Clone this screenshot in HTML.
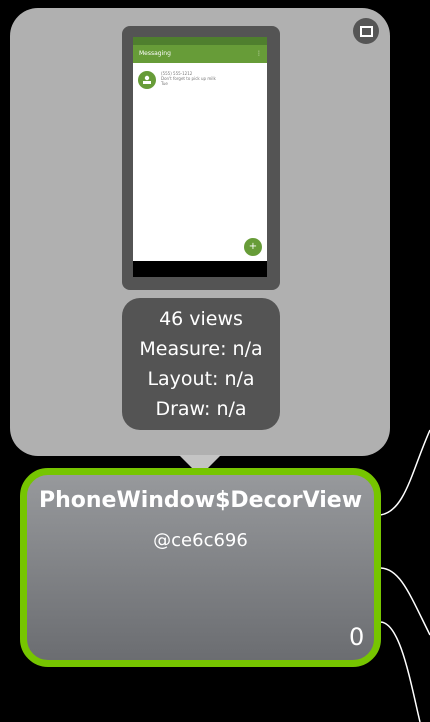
<!DOCTYPE html>
<html><head><meta charset="utf-8"><style>
body{margin:0;width:430px;height:722px;background:#000;position:relative;overflow:hidden;font-family:"DejaVu Sans","Liberation Sans",sans-serif}
div{position:absolute;box-sizing:border-box}
</style></head><body>
<svg width="430" height="722" style="position:absolute;left:0;top:0">
<path d="M380 515 C405 512 412 470 430 430" stroke="#fff" stroke-width="1.5" fill="none"/>
<path d="M380 568 C400 568 410 595 430 635" stroke="#fff" stroke-width="1.5" fill="none"/>
<path d="M380 622 C400 622 410 680 420 722" stroke="#fff" stroke-width="1.5" fill="none"/>
</svg>
<div style="left:10px;top:8px;width:380px;height:448px;background:#b0b0b0;border-radius:28px"></div>
<div style="left:353px;top:18px;width:26px;height:26px;border-radius:50%;background:#555"></div>
<div style="left:360px;top:26px;width:13px;height:11px;border:2px solid #fff"></div>
<div style="left:122px;top:26px;width:158px;height:264px;background:#545454;border-radius:8px"></div>
<div style="left:133px;top:37px;width:134px;height:240px;background:#fff"></div>
<div style="left:133px;top:37px;width:134px;height:8px;background:#4f7f2e"></div>
<div style="left:133px;top:45px;width:134px;height:18px;background:#679c38;color:#fff;font-size:6px;line-height:18px;padding-left:6px">Messaging<span style="position:absolute;right:5px">⋮</span></div>
<div style="left:138px;top:71px;width:18px;height:18px;border-radius:50%;background:#679c38"></div>
<svg width="430" height="722" style="position:absolute;left:0;top:0"><circle cx="147" cy="78" r="2.2" fill="#fff"/><rect x="143" y="81" width="8" height="3" fill="#fff"/></svg>
<div style="left:161px;top:71px;font-size:4px;line-height:5px;color:#777">(555) 555-1212<br>Don't forget to pick up milk<br>Tue</div>
<div style="left:244px;top:238px;width:18px;height:18px;border-radius:50%;background:#679c38;color:#fff;font-size:10px;line-height:18px;text-align:center">+</div>
<div style="left:133px;top:261px;width:134px;height:16px;background:#000"></div>
<div style="left:122px;top:298px;width:158px;height:132px;background:#545454;border-radius:18px;color:#fff;font-size:19px;line-height:30px;text-align:center;padding-top:6px">46 views<br>Measure: n/a<br>Layout: n/a<br>Draw: n/a</div>
<svg width="430" height="722" style="position:absolute;left:0;top:0"><path d="M179 455 L221 455 L200 476 Z" fill="#c4c4c4"/></svg>
<div style="left:20px;top:468px;width:361px;height:199px;border:7px solid #76c500;border-radius:28px;background:linear-gradient(#97999c,#6b6d71)"></div>
<div style="left:20px;top:488px;width:361px;text-align:center;color:#fff;font-weight:bold;font-size:22px">PhoneWindow$DecorView</div>
<div style="left:20px;top:530px;width:361px;text-align:center;color:#fff;font-size:18px">@ce6c696</div>
<div style="left:349px;top:623px;color:#fff;font-size:24px">0</div>
</body></html>
